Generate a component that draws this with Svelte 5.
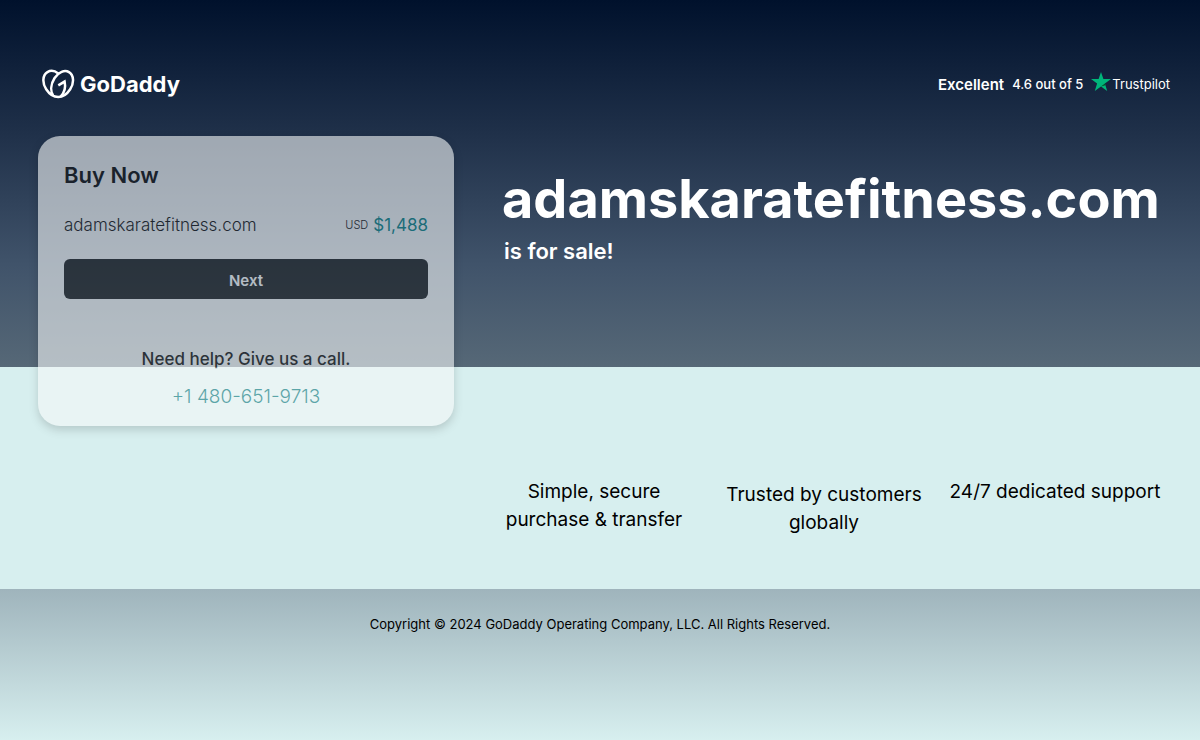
<script lang="ts">
	const domain = 'adamskaratefitness.com';
	const currency = 'USD';
	const price = '$1,488';
	const phone = '+1 480-651-9713';

	const benefits = [
		{ text: 'Simple, secure purchase & transfer' },
		{ text: 'Trusted by customers globally', lowered: true },
		{ text: '24/7 dedicated support' }
	];
</script>

<div class="page">
	<div class="hero">
		<header>
			<a class="logo" href="#home" aria-label="GoDaddy">
				<svg viewBox="0 0 34 30" width="34" height="30" aria-hidden="true">
					<g fill="none" stroke="#fff" stroke-width="2.500" stroke-linejoin="miter">
						<path d="M17.200 4.500C13.800 1.700 9.600 1.200 6.400 3.100C1.600 6 1 13.800 5.200 20.200C8.300 24.900 12.800 28 17.200 28C21.600 28 26.100 24.900 29.200 20.200C33.400 13.800 32.800 6 28 3.100C23.600.5 17.400 3 13.600 9C9.800 15 9.200 21.900 12.100 26.500" />
						<path d="M17.300 16.400L23.600 12.600C24.800 18.200 23.500 23.600 19.800 27.400" />
					</g>
				</svg>
				<span>GoDaddy</span>
			</a>
			<div class="rating">
				<strong>Excellent</strong>
				<span>4.6 out of 5</span>
				<a class="trustpilot" href="#trustpilot">
					<svg viewBox="0 0 20 19" width="20" height="19" aria-hidden="true">
						<path fill="#00b67a" d="M10 0l2.400 7.100H20l-6.100 4.500L16.200 19 10 14.500 3.800 19l2.300-7.400L0 7.100h7.600z" />
						<path fill="#005128" d="M14.400 13.200l-.5-1.600L10 14.500z" />
					</svg>
					<span>Trustpilot</span>
				</a>
			</div>
		</header>
	</div>

	<main>
		<section class="card">
			<h2>Buy Now</h2>
			<div class="offer">
				<span>{domain}</span>
				<span class="price"><small>{currency}</small> {price}</span>
			</div>
			<button type="button">Next</button>
			<p class="help">Need help? Give us a call.</p>
			<a class="phone" href="tel:+14806519713">{phone}</a>
		</section>

		<div class="content">
			<div class="title">
				<h1>{domain}</h1>
				<p>is for sale!</p>
			</div>
			<ul class="benefits">
				{#each benefits as benefit}
					<li class:lowered={benefit.lowered}>{benefit.text}</li>
				{/each}
			</ul>
		</div>
	</main>

	<footer>Copyright © 2024 GoDaddy Operating Company, LLC. All Rights Reserved.</footer>
</div>

<style>
	:global(body) {
		margin: 0;
		background: #d7efef;
	}

	.page {
		display: grid;
		grid-template-columns: minmax(0, 1fr);
		grid-template-rows: 367px 222px auto;
		min-height: 100vh;
		font-family: Inter, "Liberation Sans", sans-serif;
		color: #111;
	}

	.hero {
		grid-area: 1 / 1;
		background: linear-gradient(#00112c, #1f3049 36%, #40536a 72%, #566877);
	}

	header {
		display: flex;
		justify-content: space-between;
		align-items: center;
		padding: 64px 30px 0 41px;
		height: 40px;
		color: #fff;
	}

	.logo {
		display: flex;
		align-items: center;
		gap: 5px;
		color: #fff;
		font-size: 22px;
		font-weight: 700;
		text-decoration: none;
	}

	.rating {
		display: flex;
		align-items: center;
		gap: 8px;
		font-size: 13px;
		font-weight: 500;
	}

	.rating strong {
		font-size: 15px;
		font-weight: 600;
	}

	.trustpilot {
		display: flex;
		align-items: center;
		gap: 1px;
		color: #fff;
		font-weight: 400;
		text-decoration: none;
	}

	.trustpilot svg {
		padding-bottom: 6px;
	}

	main {
		grid-area: 1 / 1 / 3 / 2;
		display: grid;
		grid-template-columns: 416px minmax(0, 1fr);
		gap: 48px;
		align-items: start;
		padding: 136px 38px 0;
		z-index: 1;
	}

	.card {
		display: flex;
		flex-direction: column;
		padding: 24px 26px 17px;
		border-radius: 22px;
		background: #f5f8f8;
		box-shadow: 0 4px 8px rgba(0, 0, 0, 0.25);
		opacity: 0.6;
	}

	h2 {
		margin: 0;
		font-size: 22px;
		font-weight: 600;
		line-height: 30px;
	}

	.offer {
		display: flex;
		justify-content: space-between;
		margin-top: 23px;
		font-size: 17px;
		font-weight: 300;
		line-height: 24px;
	}

	.price {
		display: flex;
		gap: 5px;
		color: #09858a;
		font-weight: 400;
	}

	.price small {
		color: #111;
		font-size: 11px;
		font-weight: 300;
	}

	button {
		height: 40px;
		margin-top: 22px;
		padding-top: 4px;
		border: 0;
		border-radius: 6px;
		background: #1c1f20;
		color: #fff;
		font: inherit;
		font-size: 15px;
		font-weight: 600;
	}

	.help {
		margin: 48px 0 0;
		font-size: 17px;
		font-weight: 500;
		line-height: 24px;
		text-align: center;
	}

	.phone {
		align-self: center;
		margin-top: 14px;
		color: #09757a;
		font-size: 19px;
		font-weight: 300;
		line-height: 24px;
		text-decoration: none;
	}

	.title {
		padding-top: 27px;
		color: #fff;
	}

	h1 {
		margin: 0;
		font-size: 54px;
		font-weight: 700;
		line-height: 72px;
	}

	.title p {
		margin: 0 2px;
		font-size: 22px;
		font-weight: 600;
		line-height: 32px;
	}

	.benefits {
		display: grid;
		grid-template-columns: 184px 1fr 214px;
		gap: 26px;
		margin: 211px 0 0;
		padding: 0;
		list-style: none;
		font-size: 19px;
		line-height: 28px;
		text-align: center;
		color: #000;
	}

	.lowered {
		padding: 3px 0 0 14px;
	}

	footer {
		padding-top: 25px;
		background: linear-gradient(#9fb4bc, #d7efef);
		color: #000;
		font-size: 13px;
		line-height: 20px;
		text-align: center;
	}
</style>
